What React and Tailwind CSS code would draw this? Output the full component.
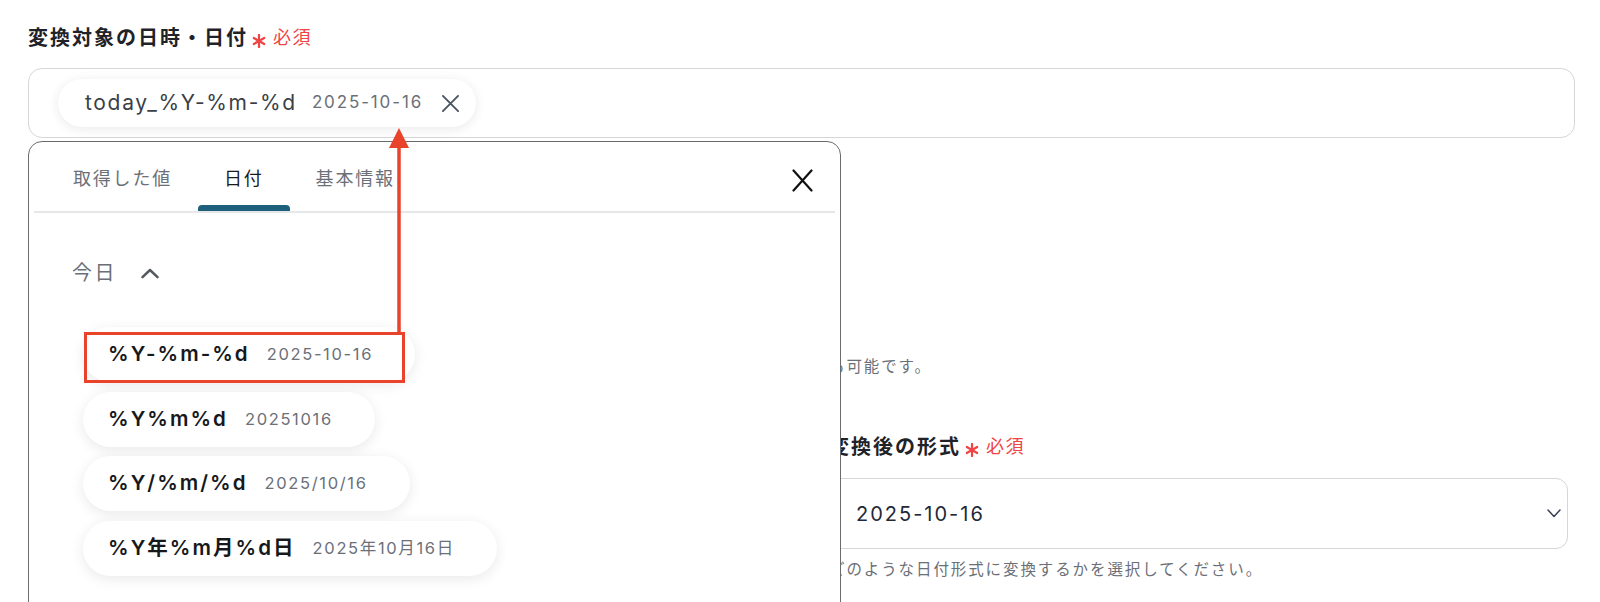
import React from "react";

function Asterisk() {
  return (
    <svg width="14" height="14" viewBox="0 0 14 14" className="shrink-0 mt-[6px]">
      <g stroke="#ef4444" strokeWidth="2.2" strokeLinecap="round">
        <line x1="7" y1="1" x2="7" y2="13" />
        <line x1="1.8" y1="4" x2="12.2" y2="10" />
        <line x1="1.8" y1="10" x2="12.2" y2="4" />
      </g>
    </svg>
  );
}

function Label({ children }) {
  return (
    <div className="flex items-center h-[24px]">
      <span className="text-[20px] leading-[24px] font-bold tracking-[0.1em] text-[#1f2328]">{children}</span>
      <span className="ml-[4px] flex items-center">
        <Asterisk />
        <span className="ml-[7px] text-[18px] leading-[24px] tracking-[0.08em] text-[#ef4444]">必須</span>
      </span>
    </div>
  );
}

function XIcon({ size = 19, color = "#4b5563", w = 2 }) {
  return (
    <svg width={size} height={size} viewBox="0 0 20 20" fill="none">
      <path d="M2 2 L18 18 M18 2 L2 18" stroke={color} strokeWidth={w} strokeLinecap="round" />
    </svg>
  );
}

const items = [
  { k: "%Y-%m-%d", v: "2025-10-16" },
  { k: "%Y%m%d", v: "20251016" },
  { k: "%Y/%m/%d", v: "2025/10/16" },
  { k: "%Y年%m月%d日", v: "2025年10月16日" },
];

export default function App() {
  return (
    <div className="relative w-[1600px] h-[602px] overflow-hidden bg-white font-['Inter','Noto_Sans_CJK_JP',sans-serif] text-[#1f2328]">
      <div className="pt-[26px] pl-[28px]">
        <Label>変換対象の日時・日付</Label>

        <div className="mt-[18px] w-[1547px] h-[70px] rounded-[14px] border border-[#d4d6da] flex items-center pl-[29px]">
          <div className="h-[48px] rounded-full bg-white shadow-[0_2px_12px_rgba(0,0,0,0.09)] flex items-center pl-[27px] pr-[16px]">
            <span className="text-[21px] tracking-[0.08em] text-[#3a3f47]">today_%Y-%m-%d</span>
            <span className="ml-[15px] text-[17px] tracking-[0.11em] text-[#6b7078]">2025-10-16</span>
            <span className="ml-[18px] flex items-center">
              <XIcon />
            </span>
          </div>
        </div>

        <div className="flex mt-[217px] gap-[24px]">
          <div className="w-[777px] pt-[80px]">
            <Label>タイムゾーン</Label>
          </div>
          <div className="w-[739px]">
            <p className="text-[15.5px] leading-[24px] tracking-[1.9px] text-[#6b7078] whitespace-nowrap">
              も可能です。
            </p>
            <div className="mt-[56px]">
              <Label>変換後の形式</Label>
            </div>
            <div className="mt-[19px] h-[71px] rounded-[12px] border border-[#d4d6da] flex items-center justify-between pl-[26px] pr-[6px]">
              <span className="text-[20px] tracking-[0.1em] text-[#1f2937]">2025-10-16</span>
              <svg width="14" height="9" viewBox="0 0 14 9" fill="none">
                <path d="M1 1 L7 7.5 L13 1" stroke="#374151" strokeWidth="1.5" strokeLinecap="round" strokeLinejoin="round" />
              </svg>
            </div>
            <p className="mt-[9px] text-[15.5px] leading-[24px] tracking-[1.9px] text-[#6b7078] whitespace-nowrap">
              どのような日付形式に変換するかを選択してください。
            </p>
          </div>
        </div>
      </div>

      {/* Popup */}
      <div className="absolute left-[28px] top-[141px] w-[813px] h-[480px] bg-white border border-[#6b6b6b] rounded-t-[14px] px-[5px]">
        <div className="flex justify-between border-b-2 border-[#e6e7e9]">
          <div className="flex pl-[13px]">
            {["取得した値", "日付", "基本情報"].map((t, i) => (
              <div key={t} className="flex flex-col">
                <span
                  className={
                    "px-[26px] mt-[25px] text-[18px] leading-[24px] tracking-[0.1em] " +
                    (i === 1 ? "text-[#1a1a1a]" : "text-[#6b7078]")
                  }
                >
                  {t}
                </span>
                <div
                  className={
                    "mt-[14px] h-[6px] w-full rounded-t-[4px] " + (i === 1 ? "bg-[#1e5f7b]" : "bg-transparent")
                  }
                />
              </div>
            ))}
          </div>
          <div className="mt-[27px] mr-[22px]">
            <svg width="21" height="23" viewBox="0 0 21 23" fill="none">
              <path d="M1.5 1.5 L19.5 21.5 M19.5 1.5 L1.5 21.5" stroke="#111" strokeWidth="2.2" strokeLinecap="round" />
            </svg>
          </div>
        </div>

        <div className="pt-[48px] pl-[38px] flex items-center h-[24px] box-content">
          <span className="text-[20px] leading-[24px] tracking-[0.12em] text-[#6b7078]">今日</span>
          <svg className="ml-[24px]" width="18" height="11" viewBox="0 0 18 11" fill="none">
            <path d="M1.5 9.2 L9 2 L16.5 9.2" stroke="#555a61" strokeWidth="2.5" strokeLinecap="round" strokeLinejoin="round" />
          </svg>
        </div>

        <div className="mt-[42px] pl-[49px] flex flex-col items-start gap-[9.5px]">
          {items.map((it) => (
            <div
              key={it.k}
              className="h-[55px] rounded-full bg-white shadow-[0_3px_14px_rgba(0,0,0,0.09)] flex items-center pl-[25px] pr-[42px]"
            >
              <span className="text-[20.5px] font-semibold tracking-[0.1em] text-[#16181b]">{it.k}</span>
              <span className="ml-[17px] text-[16.5px] tracking-[0.1em] text-[#6b7078]">{it.v}</span>
            </div>
          ))}
        </div>
      </div>

      {/* Annotation overlay */}
      <div className="absolute left-[84px] top-[332px] w-[321px] h-[51px] border-[3px] border-[#e9432b]" />
      <svg className="absolute left-[386px] top-[126px]" width="26" height="210" viewBox="0 0 26 210" fill="none">
        <line x1="13" y1="20" x2="13" y2="207" stroke="#e9432b" strokeWidth="3.5" />
        <path d="M13 2 L3 22 L23 22 Z" fill="#e9432b" />
      </svg>
    </div>
  );
}
